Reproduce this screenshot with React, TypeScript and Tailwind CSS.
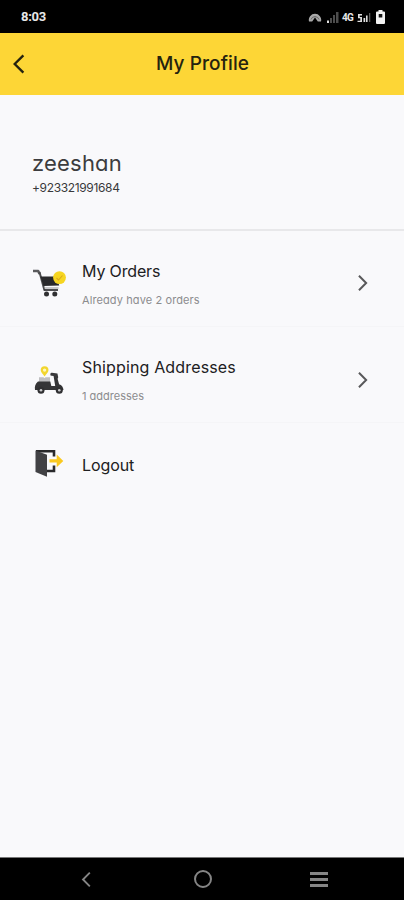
import type { ReactNode } from "react";
import { clsx } from "clsx";

type MenuItem = {
    label: string;
    labelClass: string;
    note?: string;
    noteClass?: string;
    icon: ReactNode;
    rowClass: string;
};

function CartIcon() {
    return (
        <svg viewBox="0 0 36 32" className="mt-px h-8 w-9">
            <path d="M1 3h5.2l1.4 3" fill="none" stroke="#5a5a5c" strokeWidth="2.6" strokeLinejoin="round" />
            <path d="m7.5 4 5 18.6" fill="none" stroke="#4a4a4c" strokeWidth="2" />
            <path d="M8.5 8.5h16l2.7 9-15.8.4z" fill="#29292b" />
            <path d="M12.5 20h14" stroke="#b5b5b7" strokeWidth="1.4" />
            <path d="M12 22h14" stroke="#39393b" strokeWidth="1.8" />
            <circle cx="14.5" cy="26" r="2.5" fill="#303032" />
            <circle cx="22.8" cy="26" r="2.5" fill="#303032" />
            <circle cx="27.5" cy="9.6" r="6.4" fill="#f6d521" />
            <path d="m24.5 10 2 2 4-4.5" fill="none" stroke="#d9a91b" strokeWidth="1.1" />
        </svg>
    );
}

function ScooterIcon() {
    return (
        <svg viewBox="0 0 36 32" className="mt-1 h-8 w-9">
            <path d="M12.6 10.4C10.6 7.8 8.7 6 8.7 4.1a3.9 3.9 0 0 1 7.8 0c0 1.9-1.9 3.7-3.9 6.3z" fill="#f2d62e" />
            <circle cx="12.6" cy="4.1" r="1.7" fill="#fff7bd" />
            <path d="M7 11.2h4.5l1 1 1-1H18v5H7z" fill="#bebec0" />
            <path d="M6 15.5h12.3l1 4.5h3.9L21.5 9.5h3.2l2.4 8.8c2.600.8 4.100 2.600 4.400 5.800H3c-.6-3.400.4-6.600 3-8.600z" fill="#353537" />
            <path d="M19.8 8.3 24.200 8.8l.5 2.400" fill="none" stroke="#39393b" strokeWidth="3" strokeLinecap="round" />
            <circle cx="9" cy="24.3" r="3.500" fill="#303032" />
            <circle cx="27.3" cy="24.3" r="3.500" fill="#303032" />
            <circle cx="9" cy="24.3" r="1.300" fill="#cacacc" />
            <circle cx="27.3" cy="24.3" r="1.300" fill="#cacacc" />
        </svg>
    );
}

function DoorIcon() {
    return (
        <svg viewBox="0 0 36 32" className="-mt-0.5 h-8 w-9">
            <path d="M4 3.3h18v5.2M22 17.5V23h-7" fill="none" stroke="#29292b" strokeWidth="2.6" />
            <path d="m3.5 2.5 11.5 4.3v22L3.500 24z" fill="#414144" />
            <path d="M17.5 11.2h7.2V6.500l6.600 6.400-6.600 6.400v-4.700h-7.200z" fill="#fac91f" />
        </svg>
    );
}

function Chevron({ className }: { className?: string }) {
    return (
        <svg viewBox="0 0 12 20" fill="none" stroke="currentColor" strokeWidth="2.2" className={className}>
            <path d="m1.5 2 8 8-8 8" />
        </svg>
    );
}

const menuItems: MenuItem[] = [
    {
        label: "My Orders",
        labelClass: "tracking-[-0.15px]",
        note: "Already have 2 orders",
        noteClass: "tracking-[0.1px]",
        icon: <CartIcon />,
        rowClass: "h-24 pt-[9px] border-b border-[#f5f5f7]",
    },
    {
        label: "Shipping Addresses",
        labelClass: "tracking-[0.15px]",
        note: "1 addresses",
        noteClass: "tracking-[0px]",
        icon: <ScooterIcon />,
        rowClass: "h-24 pt-2.5 border-b border-[#f5f5f7]",
    },
    {
        label: "Logout",
        labelClass: "tracking-[-0.1px]",
        icon: <DoorIcon />,
        rowClass: "h-[84px]",
    },
];

function StatusBar() {
    return (
        <div className="flex h-[33px] shrink-0 items-center justify-between bg-black pr-[19px] pl-[21px] text-[#e8e8e8]">
            <span className="pt-px font-[Roboto] text-[13px] font-bold tracking-[-0.3px]">8:03</span>
            <div className="flex items-center pt-px">
                <svg viewBox="0 0 14 12" className="mr-1 h-3 w-3.5">
                    <path d="M1 10.5a6.2 6.2 0 1 1 12 0H9.8L7 6.500l-2.800 4z" fill="#a8a8a8" />
                    <path d="M3 8.500a4.200 4.200 0 0 1 8 0" fill="none" stroke="#484848" strokeWidth=".7" />
                </svg>
                <svg viewBox="0 0 13 12" className="mr-[3px] h-3 w-[13px]" fill="#4d4d4d">
                    <path d="M1 9.5h2V12H1z" fill="#e0e0e0" />
                    <path d="M4 7h2v5H4zM7 4h2v8H7zM10 1h2.5v11H10z" />
                </svg>
                <span className="mr-[3px] w-3 font-[Roboto] text-[10px] font-bold tracking-[-0.8px]">4G</span>
                <svg viewBox="0 0 14 12" className="mr-[5px] h-3 w-3.5" fill="#dedede">
                    <path d="M1 3h4v1.5H2.7V6H5v5H.5V9.7h2.8V7.3H1zM6.5 7h1.7v4H6.5zM9 4.5h1.6V11H9z" />
                    <path d="M12 2h1.3v9H12z" fill="#5c5c5c" />
                </svg>
                <svg viewBox="0 0 9 14" className="h-3.5 w-[9px]">
                    <path d="M2.5 0h4v1.5H8q1 0 1 1V13q0 1-1 1H1q-1 0-1-1V2.5q0-1 1-1h1.5z" fill="#f2f2f2" />
                    <path d="M2.7 4h3.6v3.5H2.7z" fill="#161616" />
                </svg>
            </div>
        </div>
    );
}

function Header() {
    return (
        <header className="grid h-[62px] shrink-0 grid-cols-[1fr_auto_1fr] items-center bg-[#fdd636] px-3 text-[#25230f]">
            <Chevron className="h-[22px] w-[13px] rotate-180" />
            <h1 className="pt-px pl-px text-[19px] font-medium tracking-[0.1px]">My Profile</h1>
        </header>
    );
}

function MenuRow({ item }: { item: MenuItem }) {
    return (
        <li className={clsx("flex items-center pr-[35px] pl-8", item.rowClass)}>
            {item.icon}
            <div className="ml-3.5 flex-1">
                <p className={clsx("text-base leading-6 text-[#202022]", item.labelClass)}>{item.label}</p>
                {item.note && (
                    <p className={clsx("mt-[9px] text-[11px] leading-4 text-[#8c8c8e]", item.noteClass)}>{item.note}</p>
                )}
            </div>
            {item.note && <Chevron className="h-[18px] w-3 text-[#58585a]" />}
        </li>
    );
}

function SystemNav() {
    return (
        <nav className="flex h-[43px] shrink-0 items-center border-t border-[#777] bg-black pr-[76px] pl-20 text-[#858585]">
            <Chevron className="h-[17px] w-3 rotate-180" />
            <div className="ml-[102px] size-[18px] rounded-full border-2 border-current" />
            <div className="ml-auto flex w-[18px] flex-col gap-[3px]">
                <span className="h-[3px] bg-current" />
                <span className="h-[3px] bg-current" />
                <span className="h-[3px] bg-current" />
            </div>
        </nav>
    );
}

export default function App() {
    return (
        <div className="flex h-[900px] w-[404px] flex-col overflow-hidden bg-[#f9f9fb] font-[Inter,sans-serif] [font-feature-settings:'cv11']">
            <StatusBar />
            <Header />
            <section className="h-[136px] shrink-0 border-b-2 border-[#e8e8ea] pt-[54px] pl-8">
                <h2 className="text-[22px] leading-7 tracking-[0.2px] text-[#3c3c3e]">zeeshan</h2>
                <p className="pt-px text-[12px] leading-5 tracking-[-0.35px] text-[#39393b]">+923321991684</p>
            </section>
            <ul className="flex-1">
                {menuItems.map((item) => (
                    <MenuRow key={item.label} item={item} />
                ))}
            </ul>
            <SystemNav />
        </div>
    );
}
